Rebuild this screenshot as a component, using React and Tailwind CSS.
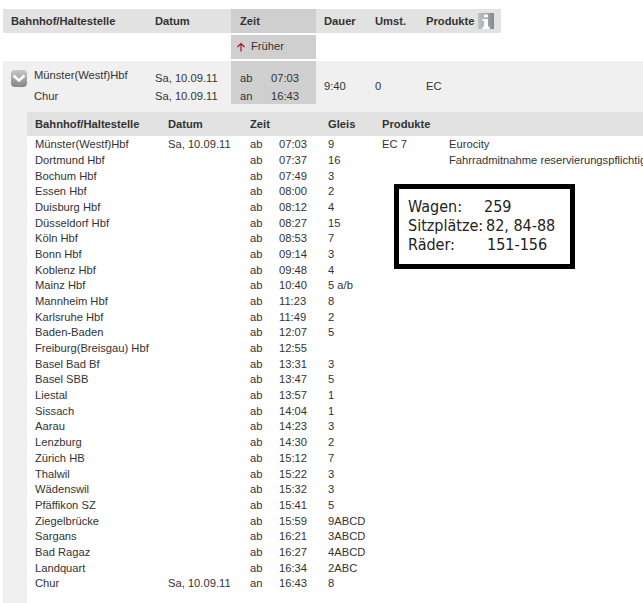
const STOPS = [
  ["Münster(Westf)Hbf", "Sa, 10.09.11", "ab", "07:03", "9", "EC 7", "Eurocity"],
  ["Dortmund Hbf", "", "ab", "07:37", "16", "", "Fahrradmitnahme reservierungspflichtig"],
  ["Bochum Hbf", "", "ab", "07:49", "3"],
  ["Essen Hbf", "", "ab", "08:00", "2"],
  ["Duisburg Hbf", "", "ab", "08:12", "4"],
  ["Düsseldorf Hbf", "", "ab", "08:27", "15"],
  ["Köln Hbf", "", "ab", "08:53", "7"],
  ["Bonn Hbf", "", "ab", "09:14", "3"],
  ["Koblenz Hbf", "", "ab", "09:48", "4"],
  ["Mainz Hbf", "", "ab", "10:40", "5 a/b"],
  ["Mannheim Hbf", "", "ab", "11:23", "8"],
  ["Karlsruhe Hbf", "", "ab", "11:49", "2"],
  ["Baden-Baden", "", "ab", "12:07", "5"],
  ["Freiburg(Breisgau) Hbf", "", "ab", "12:55", ""],
  ["Basel Bad Bf", "", "ab", "13:31", "3"],
  ["Basel SBB", "", "ab", "13:47", "5"],
  ["Liestal", "", "ab", "13:57", "1"],
  ["Sissach", "", "ab", "14:04", "1"],
  ["Aarau", "", "ab", "14:23", "3"],
  ["Lenzburg", "", "ab", "14:30", "2"],
  ["Zürich HB", "", "ab", "15:12", "7"],
  ["Thalwil", "", "ab", "15:22", "3"],
  ["Wädenswil", "", "ab", "15:32", "3"],
  ["Pfäffikon SZ", "", "ab", "15:41", "5"],
  ["Ziegelbrücke", "", "ab", "15:59", "9ABCD"],
  ["Sargans", "", "ab", "16:21", "3ABCD"],
  ["Bad Ragaz", "", "ab", "16:27", "4ABCD"],
  ["Landquart", "", "ab", "16:34", "2ABC"],
  ["Chur", "Sa, 10.09.11", "an", "16:43", "8"],
];

const StopRow = ({ stop }) => (
  <div className="grid grid-cols-[133px_82px_29px_49px_54px_67px_1fr] h-[15.68px] leading-[15.68px] pl-2 whitespace-nowrap">
    {[0, 1, 2, 3, 4, 5, 6].map((i) => (
      <span key={i}>{stop[i] || ""}</span>
    ))}
  </div>
);

const InfoIcon = () => (
  <svg width="16" height="16" viewBox="0 0 16 16" className="ml-[3px] shrink-0">
    <defs>
      <linearGradient id="infoBg" x1="0" y1="0" x2="1" y2="0">
        <stop offset="0" stopColor="#c4c4c4" />
        <stop offset="1" stopColor="#7f8a8e" />
      </linearGradient>
    </defs>
    <rect width="16" height="16" fill="url(#infoBg)" />
    <rect x="6" y="1.5" width="4" height="3" fill="#fff" />
    <path d="M4.5 6h5.5v7.5h1.5V16H4.5v-2.5H6V8H4.5z" fill="#fff" />
  </svg>
);

const ChevronButton = () => (
  <div className="w-4 h-[17px] mt-[9px] ml-2 rounded-sm bg-gradient-to-b from-[#c8c8c8] to-[#858585] flex items-center justify-center shrink-0">
    <svg width="14" height="9" viewBox="0 0 14 9">
      <path d="M1.5 1.5 7 6.5l5.5-5" fill="none" stroke="#fff" strokeWidth="2.6" />
    </svg>
  </div>
);

const App = () => (
  <div className="relative w-[643px] h-[603px] overflow-hidden bg-white pt-[9px] text-[11.2px] text-[#333333] font-['Liberation_Sans',Arial,sans-serif]">
    <div className="ml-[3px] w-[498px] h-6 bg-[#e2e2e2] grid grid-cols-[152px_76px_85px_51px_51px_1fr] font-bold leading-6">
      <span className="pl-2">Bahnhof/Haltestelle</span>
      <span>Datum</span>
      <span className="bg-[#cfcfcf] pl-[9px]">Zeit</span>
      <span className="pl-2">Dauer</span>
      <span className="pl-[8px]">Umst.</span>
      <span className="pl-[8px] flex items-center">
        Produkte
        <InfoIcon />
      </span>
    </div>

    <div className="ml-[231px] w-[85px] h-6 mt-[2px] bg-[#cfcfcf] flex items-center pl-[5px] gap-[2px]">
      <svg width="10" height="10" viewBox="0 0 10 10">
        <path d="M5 9.5V1.5M1.5 5 5 1.5 8.5 5" fill="none" stroke="#b0102a" strokeWidth="1.2" />
      </svg>
      <span className="ml-[3px] -mt-[2px]">Früher</span>
    </div>

    <div className="mt-[2px] ml-[3px] h-[542px] bg-[#f0f0f0] flex flex-col">
      <div className="w-[498px] h-[48px] grid grid-cols-[152px_76px_85px_51px_51px_1fr] shrink-0">
        <div className="flex">
          <ChevronButton />
          <div className="ml-[7px] pt-[4px] leading-[21px]">
            <div>Münster(Westf)Hbf</div>
            <div>Chur</div>
          </div>
        </div>
        <div className="pt-[8px] leading-[18px]">
          <div>Sa, 10.09.11</div>
          <div>Sa, 10.09.11</div>
        </div>
        <div className="h-[43px] bg-[#cfcfcf] pl-[9px] pt-[8px] leading-[18px] grid grid-cols-[31px_1fr] content-start">
          <span>ab</span>
          <span>07:03</span>
          <span>an</span>
          <span>16:43</span>
        </div>
        <div className="pl-2 pt-[19px] leading-[13px]">9:40</div>
        <div className="pl-2 pt-[19px] leading-[13px]">0</div>
        <div className="pl-2 pt-[19px] leading-[13px]">EC</div>
      </div>

      <div className="ml-6 mt-[3px] w-[616px] flex-1 bg-white overflow-hidden">
        <div className="h-6 mb-[1.4px] bg-[#e2e2e2] grid grid-cols-[133px_82px_78px_54px_1fr] pl-2 font-bold leading-6">
          <span>Bahnhof/Haltestelle</span>
          <span>Datum</span>
          <span>Zeit</span>
          <span>Gleis</span>
          <span>Produkte</span>
        </div>
        {STOPS.map((stop) => (
          <StopRow key={stop[0]} stop={stop} />
        ))}
      </div>
    </div>

    <div className="absolute left-[394px] top-[184px] w-[181px] h-[85px] border-[5px] border-black bg-white pl-[9px] pt-[8px] text-[16px] leading-[19px] text-[#222222] font-['DejaVu_Sans_Condensed','Noto_Sans',sans-serif] whitespace-nowrap">
      <div className="grid grid-cols-[76px_1fr]">
        <span>Wagen:</span>
        <span>259</span>
      </div>
      <div className="grid grid-cols-[78px_1fr]">
        <span>Sitzplätze:</span>
        <span>82, 84-88</span>
      </div>
      <div className="grid grid-cols-[79px_1fr]">
        <span>Räder:</span>
        <span>151-156</span>
      </div>
    </div>
  </div>
);

export default App;
